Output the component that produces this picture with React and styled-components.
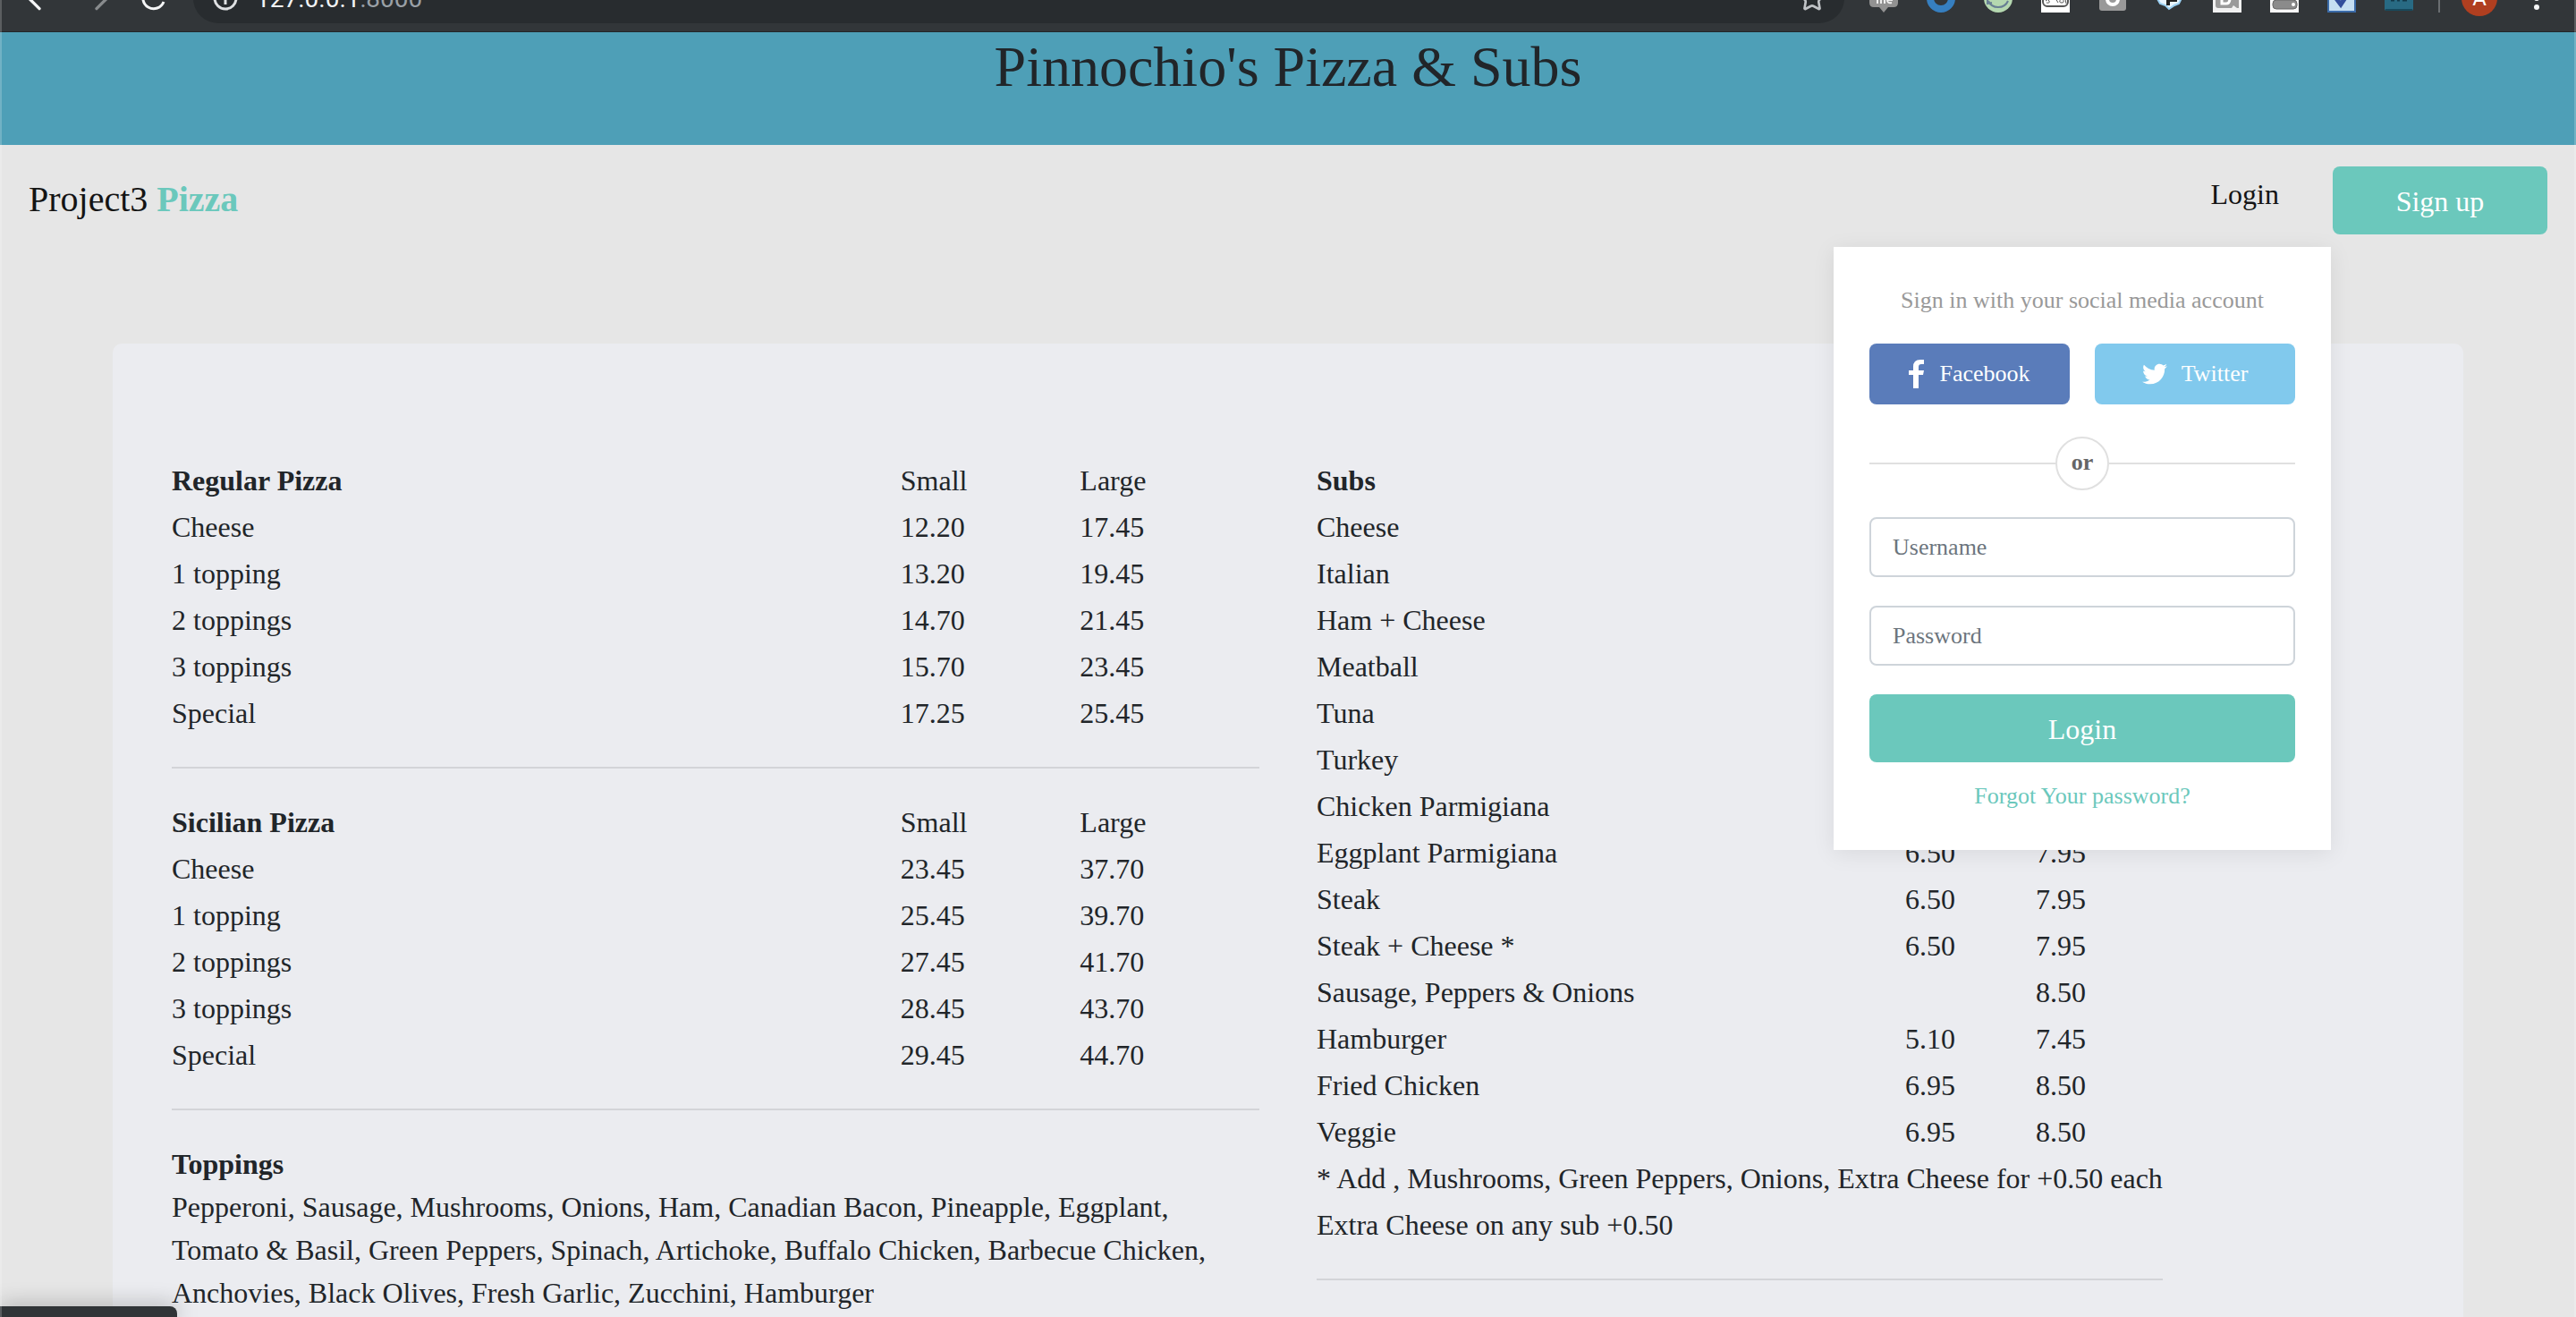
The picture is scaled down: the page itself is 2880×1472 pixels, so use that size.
import React from "react";
import styled, { createGlobalStyle } from "styled-components";
import { ArrowLeft, ArrowRight, Star } from "lucide-react";
import { FaTwitter } from "react-icons/fa";

const GlobalStyle = createGlobalStyle`
  *, *::before, *::after { box-sizing: border-box; }
  html, body { margin: 0; overflow: hidden; }
  body {
    background: #e6e6e6;
    color: #212529;
    font-family: "Liberation Serif", "Times New Roman", serif;
    font-size: 32px;
    line-height: 48px;
  }
  a { color: inherit; text-decoration: none; }
  button, input { font: inherit; }
`;

const accent = "#6bc8bc";

const Page = styled.div`
  display: flex;
  flex-direction: column;
  min-height: 100vh;
`;

/* Light edge of the browser window */
const WindowEdge = styled.div`
  position: fixed;
  inset: 0;
  z-index: 2;
  border: solid rgba(255, 255, 255, 0.2);
  border-width: 0 2px;
  pointer-events: none;
`;

/* Browser toolbar */

const Toolbar = styled.div`
  display: flex;
  align-items: flex-end;
  height: 36px;
  overflow: hidden;
  background: #323639;
`;

const ToolbarRow = styled.div`
  flex: 1;
  display: flex;
  align-items: center;
  gap: 24px;
  height: 76px;
  padding: 0 32px 0 24px;
  border-bottom: 1px solid #222629;
`;

const ToolButton = styled.button`
  display: flex;
  justify-content: center;
  width: ${(p) => p.$width || 40}px;
  padding: 0;
  border: 0;
  background: none;
  color: ${(p) => (p.$dim ? "#888b8d" : "#f5f6f7")};
`;

const AddressBar = styled.div`
  flex: 1;
  display: flex;
  align-items: center;
  gap: 18px;
  height: 56px;
  padding: 0 20px;
  border-radius: 28px;
  background: #282c2f;
  color: #c0c3c6;
`;

const Url = styled.span`
  flex: 1;
  padding-top: 2px;
  color: #f1f3f4;
  font-family: Roboto, sans-serif;
  font-size: 28px;
  line-height: 32px;
`;

const Port = styled.span`
  color: #9aa0a6;
`;

const Extensions = styled.div`
  display: flex;
  gap: 32px;
  padding: 0 4px;
`;

const Separator = styled.span`
  width: 2px;
  height: 32px;
  background: #6a6e71;
`;

const Avatar = styled.button`
  width: 40px;
  height: 40px;
  margin-right: 8px;
  padding: 0;
  border: 0;
  border-radius: 50%;
  background: #b03f20;
  color: #fff;
  font-family: Roboto, sans-serif;
  font-size: 24px;
  line-height: 40px;
`;

/* Page header */

const Banner = styled.header`
  height: 126px;
  background: #4e9fb7;
  text-align: center;
`;

const Title = styled.h1`
  margin: 0;
  font-size: 64px;
  font-weight: 400;
  line-height: 78px;
`;

const Nav = styled.nav`
  display: flex;
  align-items: flex-start;
  height: 222px;
  padding: 24px 32px;
`;

const Brand = styled.a`
  margin-right: auto;
  color: #141414;
  font-size: 40px;
  line-height: 74px;

  b { color: ${accent}; }
`;

const LoginItem = styled.div`
  position: relative;
  padding-right: 60px;
  color: #141414;
  line-height: 62px;
`;

const PrimaryButton = styled.button`
  width: ${(p) => p.$width};
  height: 76px;
  padding: 2px 0 0;
  border: 0;
  border-radius: 8px;
  background: ${accent};
  color: #fff;
  font-size: 32px;
`;

/* Login panel */

const LoginPanel = styled.form`
  position: absolute;
  top: 90px;
  right: 2px;
  z-index: 1;
  display: flex;
  flex-direction: column;
  width: 556px;
  padding: 40px;
  background: #fff;
  box-shadow: 0 4px 24px rgba(0, 0, 0, 0.08);
  font-size: 26px;
  line-height: 40px;
  text-align: center;
`;

const Hint = styled.p`
  margin: 0 0 28px;
  color: #999;
`;

const SocialRow = styled.div`
  display: grid;
  grid-template-columns: 1fr 1fr;
  gap: 28px;
`;

const SocialButton = styled.button`
  display: flex;
  align-items: center;
  justify-content: center;
  gap: 16px;
  height: 68px;
  padding: 0;
  border: 0;
  border-radius: 8px;
  background: ${(p) => p.$color};
  color: #fff;
`;

const OrDivider = styled.div`
  display: flex;
  align-items: center;
  margin: 36px 0 30px;

  &::before, &::after {
    content: "";
    flex: 1;
    height: 2px;
    background: #e0e0e0;
  }
`;

const OrBadge = styled.b`
  width: 60px;
  height: 60px;
  border: 2px solid #e0e0e0;
  border-radius: 50%;
  color: #666;
  line-height: 54px;
`;

const Field = styled.input`
  width: 100%;
  height: 67px;
  margin-bottom: 32px;
  padding: 0 24px;
  border: 2px solid #ced4da;
  border-radius: 8px;
  background: #fff;

  &::placeholder { color: #6c757d; opacity: 1; }
`;

const ForgotLink = styled.a`
  margin-top: 18px;
  color: ${accent};
`;

/* Menu */

const MenuCard = styled.main`
  flex: 1;
  display: grid;
  grid-template-columns: minmax(0, 1fr) minmax(0, 1fr);
  align-items: start;
  gap: 64px;
  margin: 0 126px;
  padding: 125px 66px 0;
  border-radius: 10px 10px 0 0;
  background: #ebecf0;
`;

const MenuColumn = styled.div`
  width: ${(p) => (p.$fit ? "fit-content" : "auto")};
`;

const MenuTable = styled.table`
  width: 100%;
  border-spacing: 0 4px;
  table-layout: ${(p) => (p.$fixed ? "fixed" : "auto")};

  th, td {
    height: 48px;
    padding: 0;
    text-align: left;
    font-weight: 400;
  }
`;

const Col = styled.col`
  width: ${(p) => p.$width};
`;

const Rule = styled.hr`
  height: 2px;
  margin: 32px 0;
  border: 0;
  background: #d3d4d8;
`;

const Toppings = styled.section`
  padding-top: 4px;
`;

const ToppingsTitle = styled.h2`
  margin: 0;
  font-size: 32px;
  line-height: 48px;
`;

const ToppingsText = styled.p`
  margin: 0;
`;

const StatusBubble = styled.div`
  position: fixed;
  left: 0;
  bottom: 0;
  width: 198px;
  height: 12px;
  border-radius: 0 8px 0 0;
  background: #303437;
  box-shadow: 0 0 24px rgba(0, 0, 0, 0.35);
`;

const regular = [
  ["Cheese", "12.20", "17.45"],
  ["1 topping", "13.20", "19.45"],
  ["2 toppings", "14.70", "21.45"],
  ["3 toppings", "15.70", "23.45"],
  ["Special", "17.25", "25.45"],
];

const sicilian = [
  ["Cheese", "23.45", "37.70"],
  ["1 topping", "25.45", "39.70"],
  ["2 toppings", "27.45", "41.70"],
  ["3 toppings", "28.45", "43.70"],
  ["Special", "29.45", "44.70"],
];

const subs = [
  ["Cheese"],
  ["Italian"],
  ["Ham + Cheese"],
  ["Meatball"],
  ["Tuna"],
  ["Turkey"],
  ["Chicken Parmigiana"],
  ["Eggplant Parmigiana", "6.50", "7.95"],
  ["Steak", "6.50", "7.95"],
  ["Steak + Cheese *", "6.50", "7.95"],
  ["Sausage, Peppers & Onions", "", "8.50"],
  ["Hamburger", "5.10", "7.45"],
  ["Fried Chicken", "6.95", "8.50"],
  ["Veggie", "6.95", "8.50"],
];

const subNotes = [
  "* Add , Mushrooms, Green Peppers, Onions, Extra Cheese for +0.50 each",
  "Extra Cheese on any sub +0.50",
];

function PriceTable({ title, rows, widths, notes = [], fixed }) {
  return (
    <MenuTable $fixed={fixed}>
      <colgroup>
        {widths.map((w, i) => <Col key={i} $width={w} />)}
      </colgroup>
      <thead>
        <tr>
          <th scope="col"><b>{title}</b></th>
          <th scope="col">Small</th>
          <th scope="col">Large</th>
        </tr>
      </thead>
      <tbody>
        {rows.map(([name, small, large]) => (
          <tr key={name}>
            <td>{name}</td>
            <td>{small}</td>
            <td>{large}</td>
          </tr>
        ))}
        {notes.map((note) => (
          <tr key={note}><td colSpan={3}>{note}</td></tr>
        ))}
      </tbody>
    </MenuTable>
  );
}

const Icon = ({ children }) => (
  <svg width="32" height="32" viewBox="0 0 32 32" fill="none" aria-hidden="true">{children}</svg>
);

function ExtensionIcons() {
  return (
    <Extensions>
      <Icon>
        <path d="M3 2h26q3 0 3 3v16q0 5-5 5h-6l-5 6-5-6H5q-5 0-5-5V5q0-3 3-3z" fill="#929292" />
        <path d="M9 22v-7m0 2q4-4 4 1v4m0-4q4-5 4 0v4M20 18h5q0-4-2.500-4t-2.500 4 5 3" stroke="#eee" strokeWidth="2" />
      </Icon>
      <Icon><circle cx="16" cy="16" r="12" stroke="#367fc0" strokeWidth="8" /></Icon>
      <Icon>
        <circle cx="16" cy="16" r="16" fill="#b5d8b0" />
        <path d="M5 19q3 7 11 7t11-7" stroke="#687f94" strokeWidth="2" />
        <path d="M4 16v6l5-1" stroke="#687f94" strokeWidth="2" />
      </Icon>
      <Icon>
        <path d="M0 0h32v32H0z" fill="#fff" />
        <rect x="2" y="8" width="28" height="17" rx="5" stroke="#555" strokeWidth="2" />
        <path d="M5 19q3-3 4 0t-3 2M16 16l3 5M22 17q-3 4 1 4t1-4M27 17l1 5" stroke="#555" strokeWidth="1" />
      </Icon>
      <Icon>
        <rect x="1" y="1" width="30" height="29" rx="3" fill="#999" />
        <circle cx="16" cy="17" r="6" stroke="#fff" strokeWidth="4" />
      </Icon>
      <Icon>
        <path d="M1 15l4 7 6 2 4 4 6-4 5-2 4-8-6-8H5z" fill="#e8f5ff" stroke="#9bd0f2" strokeWidth="2" />
        <path d="M14 24V12h8v6h-7" stroke="#222" strokeWidth="4" />
      </Icon>
      <Icon>
        <path d="M0 0h32v32H0z" fill="#f1f1f1" />
        <path d="M3 5h20v13l4-4h2v13h-2l-4-3-2 3H6q-3 0-3-3z" fill="#9a9a9a" />
        <path d="M10 10v12h5q4 0 4-6t-4-6z" stroke="#fff" strokeWidth="3" />
      </Icon>
      <Icon>
        <path d="M0 0h32v32H0z" fill="#f8f8f8" />
        <rect x="4" y="4" width="24" height="13" rx="3" fill="#bbb" />
        <rect x="3" y="18" width="27" height="10" rx="4" fill="#8b8b8b" stroke="#666" />
        <circle cx="26" cy="23" r="2" fill="#fff" />
      </Icon>
      <Icon>
        <path d="M1 1h30v30H1z" fill="#c5def2" stroke="#3b6ba8" strokeWidth="2" />
        <path d="M9 15l6 8 8-12" stroke="#334e9c" strokeWidth="5" />
      </Icon>
      <Icon>
        <rect y="2" width="32" height="28" rx="2" fill="#286a83" />
        <path d="M1 29h30" stroke="#17495c" strokeWidth="2" />
        <path d="M7 18h4m3 0h3m3 0h5" stroke="#12394a" strokeWidth="3" />
      </Icon>
    </Extensions>
  );
}

function BrowserToolbar() {
  return (
    <Toolbar>
      <ToolbarRow>
        <ToolButton aria-label="Back"><ArrowLeft size={40} strokeWidth={2} /></ToolButton>
        <ToolButton aria-label="Forward" $dim><ArrowRight size={40} strokeWidth={2} /></ToolButton>
        <ToolButton aria-label="Reload">
          <svg width="32" height="32" viewBox="0 0 32 32" fill="none">
            <path d="M27 20a12 12 0 1 1-2-12l3 3m0-8v8h-8" stroke="currentColor" strokeWidth="3" />
          </svg>
        </ToolButton>
        <AddressBar>
          <Icon>
            <circle cx="16" cy="16" r="12" stroke="#dfe1e3" strokeWidth="3" />
            <path d="M16 14v9" stroke="#dfe1e3" strokeWidth="3" />
          </Icon>
          <Url>127.0.0.1<Port>:8000</Port></Url>
          <Star size={32} strokeWidth={2} />
        </AddressBar>
        <ExtensionIcons />
        <Separator />
        <Avatar aria-label="Profile">A</Avatar>
        <ToolButton aria-label="Menu" $width={24}>
          <svg width="24" height="32" viewBox="0 0 24 32" fill="currentColor">
            <circle cx="12" cy="6" r="3" />
            <circle cx="12" cy="16" r="3" />
            <circle cx="12" cy="26" r="3" />
          </svg>
        </ToolButton>
      </ToolbarRow>
    </Toolbar>
  );
}

function FacebookIcon() {
  return (
    <svg width="18" height="32" viewBox="0 0 18 32" fill="currentColor" aria-hidden="true">
      <path d="M17 0v5h-3q-3 0-3 3v4h6l-1 5h-5v15H5V17H0v-5h5V8q0-8 8-8z" />
    </svg>
  );
}

export default function App() {
  const pizzaWidths = ["67%", "16.5%", "16.5%"];
  return (
    <Page>
      <GlobalStyle />
      <BrowserToolbar />
      <Banner><Title>Pinnochio's Pizza &amp; Subs</Title></Banner>
      <Nav>
        <Brand href="#">Project3 <b>Pizza</b></Brand>
        <LoginItem>
          <a href="#login">Login</a>
          <LoginPanel id="login">
            <Hint>Sign in with your social media account</Hint>
            <SocialRow>
              <SocialButton type="button" $color="#5a7cba"><FacebookIcon />Facebook</SocialButton>
              <SocialButton type="button" $color="#81c9ed"><FaTwitter size={28} />Twitter</SocialButton>
            </SocialRow>
            <OrDivider><OrBadge>or</OrBadge></OrDivider>
            <Field type="text" placeholder="Username" aria-label="Username" />
            <Field type="password" placeholder="Password" aria-label="Password" />
            <PrimaryButton type="button" $width="100%">Login</PrimaryButton>
            <ForgotLink href="#">Forgot Your password?</ForgotLink>
          </LoginPanel>
        </LoginItem>
        <PrimaryButton type="button" $width="240px">Sign up</PrimaryButton>
      </Nav>
      <MenuCard>
        <MenuColumn>
          <PriceTable title="Regular Pizza" rows={regular} widths={pizzaWidths} fixed />
          <Rule />
          <PriceTable title="Sicilian Pizza" rows={sicilian} widths={pizzaWidths} fixed />
          <Rule />
          <Toppings>
            <ToppingsTitle>Toppings</ToppingsTitle>
            <ToppingsText>
              Pepperoni, Sausage, Mushrooms, Onions, Ham, Canadian Bacon, Pineapple, Eggplant,
              Tomato &amp; Basil, Green Peppers, Spinach, Artichoke, Buffalo Chicken, Barbecue Chicken,
              Anchovies, Black Olives, Fresh Garlic, Zucchini, Hamburger
            </ToppingsText>
          </Toppings>
        </MenuColumn>
        <MenuColumn $fit>
          <PriceTable title="Subs" rows={subs} widths={["658px", "146px", "auto"]} notes={subNotes} />
          <Rule />
        </MenuColumn>
      </MenuCard>
      <StatusBubble />
      <WindowEdge />
    </Page>
  );
}
